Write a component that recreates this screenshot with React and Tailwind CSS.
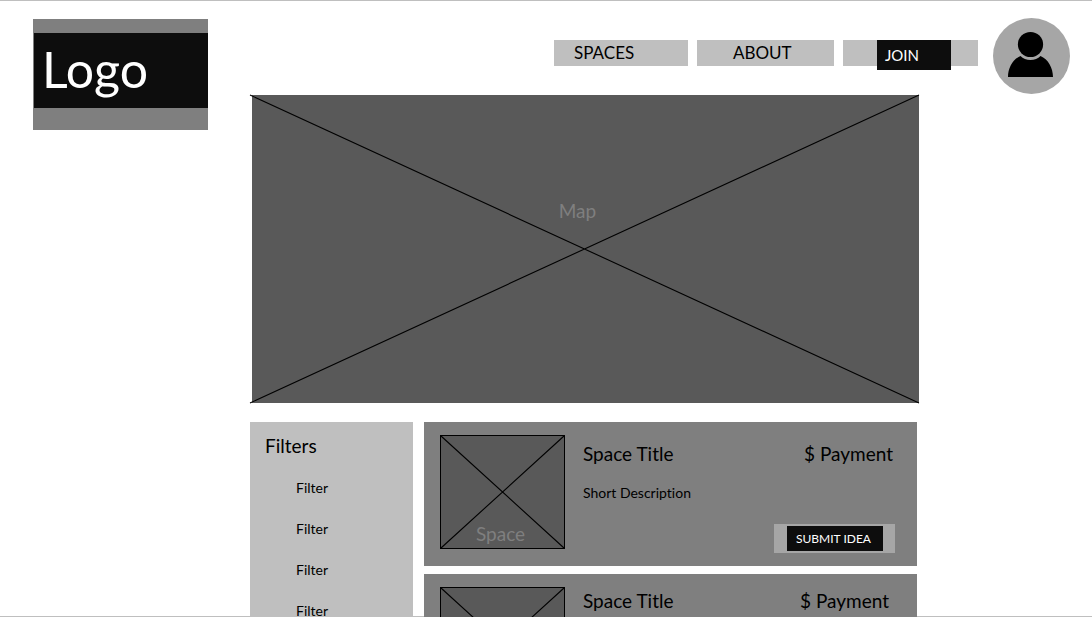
import React from "react";

const filters = ["Filter", "Filter", "Filter", "Filter"];

const spaces = [
  { id: 1, inset: "pt-5 pr-6" },
  { id: 2, inset: "pt-[15px] pr-7" },
];

function Cross({ left = 0 }) {
  return (
    <svg
      className="absolute inset-0 h-full w-full overflow-visible"
      viewBox="0 0 100 100"
      preserveAspectRatio="none"
      aria-hidden="true"
    >
      <path
        d={`M${left} 0L100 100M100 0L${left} 100`}
        stroke="#000"
        strokeWidth="1.1"
        vectorEffect="non-scaling-stroke"
      />
    </svg>
  );
}

function Logo() {
  return (
    <a
      href="#home"
      className="mt-[19px] w-[175px] shrink-0 self-start bg-[#7f7f7f] pt-[14px] pb-[22px] pl-px"
    >
      <span className="block bg-[#0d0d0d] pb-0.5 pl-2 text-[50px] leading-[73px] text-white">
        Logo
      </span>
    </a>
  );
}

function Header() {
  return (
    <header className="flex justify-end pt-[18px] pr-[22px]">
      <nav className="mt-[22px] flex items-start gap-[9px] text-[17px] leading-[26px]">
        <a href="#spaces" className="h-[26px] w-[134px] bg-[#bfbfbf] pl-5">
          SPACES
        </a>
        <a href="#about" className="h-[26px] w-[137px] bg-[#bfbfbf] pl-9">
          ABOUT
        </a>
        <div className="h-[26px] w-[135px] bg-[#bfbfbf] pl-[34px]">
          <button
            type="button"
            className="block h-[30px] w-[74px] bg-[#0d0d0d] pl-2 text-left text-[15px] leading-[30px] text-white"
          >
            JOIN
          </button>
        </div>
      </nav>
      <button type="button" aria-label="Account" className="ml-[15px] block h-[77px] w-[77px]">
        <svg viewBox="0 0 77 77" className="block h-full w-full" aria-hidden="true">
          <ellipse cx="38.5" cy="38" rx="38.5" ry="38" fill="#a6a6a6" />
          <circle cx="37.5" cy="26.5" r="12.6" />
          <path d="M15 59C15 50 20 41 27.500 38C30 40.500 33.500 42 37.500 42C41.500 42 45 40.500 47.500 38C55 41 60 50 60 59Z" />
        </svg>
      </button>
    </header>
  );
}

function SpaceCard({ inset }) {
  return (
    <article className="flex h-36 bg-[#7f7f7f] pl-4">
      <div className="relative mt-[13px] h-[114px] w-[125px] shrink-0 border border-black bg-[#595959]">
        <Cross />
        <span className="absolute inset-x-0 bottom-0.5 pr-1 text-center text-[19px] leading-6 text-[#7f7f7f]">
          Space
        </span>
      </div>
      <div className={`flex flex-1 flex-col pl-[18px] ${inset}`}>
        <div className="flex justify-between text-[19px] leading-6">
          <h2>Space Title</h2>
          <p>$ Payment</p>
        </div>
        <p className="mt-[15px] text-sm leading-6">Short Description</p>
        <div className="-mr-0.5 mt-[19px] flex h-[29px] w-[121px] items-center self-end bg-[#a6a6a6] pl-[13px]">
          <button
            type="button"
            className="h-[25px] w-24 bg-[#0d0d0d] pl-[9px] text-left text-xs leading-[25px] text-white"
          >
            SUBMIT IDEA
          </button>
        </div>
      </div>
    </article>
  );
}

export default function App() {
  return (
    <div className="h-screen overflow-y-auto bg-white font-['Lato','Liberation_Sans',sans-serif] text-black shadow-[inset_0_1px_0_#bfbfbf,inset_0_-1px_0_#bfbfbf] [font-variant-ligatures:none] [scrollbar-width:none]">
      <div className="flex pl-[33px]">
        <Logo />
        <div className="ml-[42px] min-w-0 flex-1">
          <Header />
          <main className="mr-[173px]">
            <section aria-label="Map" className="relative ml-0.5 h-[308px] bg-[#595959]">
              <Cross left={-0.3} />
              <span className="absolute inset-x-0 top-[104px] pr-4 text-center text-[19px] leading-6 text-[#7f7f7f]">
                Map
              </span>
            </section>
            <div className="mt-[19px] mr-0.5 flex gap-[11px]">
              <aside className="w-[163px] shrink-0 bg-[#bfbfbf] px-[15px] pt-3">
                <h2 className="text-[19px] leading-6">Filters</h2>
                <ul className="mt-[9px] pl-[31px]">
                  {filters.map((label, i) => (
                    <li key={i}>
                      <button type="button" className="block text-sm leading-[41px]">
                        {label}
                      </button>
                    </li>
                  ))}
                </ul>
              </aside>
              <div className="flex min-w-0 flex-1 flex-col gap-2">
                {spaces.map((space) => (
                  <SpaceCard key={space.id} inset={space.inset} />
                ))}
              </div>
            </div>
          </main>
        </div>
      </div>
    </div>
  );
}
